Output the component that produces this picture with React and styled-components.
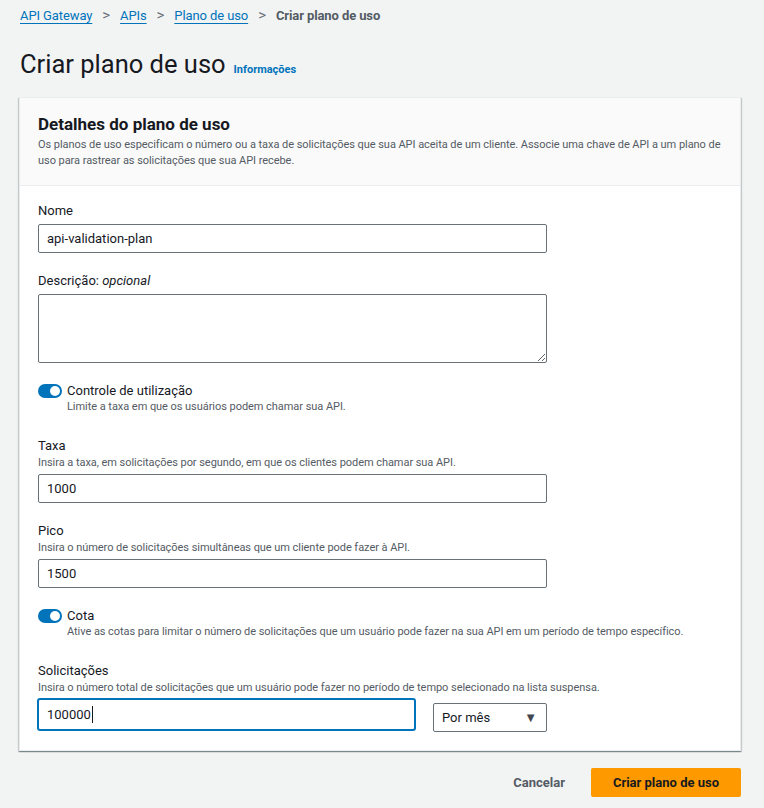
import React from "react";
import styled, { createGlobalStyle } from "styled-components";

const Global = createGlobalStyle`
  html, body { margin: 0; padding: 0; background: #f2f3f3; }
  body { font-family: Roboto, "Noto Sans", "Liberation Sans", sans-serif; color: #16191f; }
  * { box-sizing: border-box; }
`;

const Page = styled.div`
  width: 764px;
  min-height: 808px;
  padding: 5px 23px 11px 19px;
  background: #f2f3f3;
`;

const Breadcrumbs = styled.nav`
  display: flex;
  align-items: center;
  height: 20px;
  padding-left: 1px;
  font-size: 13px;
  letter-spacing: -0.1px;
`;

const Crumb = styled.a`
  color: #0073bb;
  text-decoration: underline;
  text-underline-offset: 3px;
  text-decoration-thickness: 1px;
`;

const Sep = styled.span`
  color: #687078;
  margin: 0 10px;
  font-size: 15px;
  line-height: 20px;
`;

const Current = styled.span`
  color: #545b64;
  font-weight: 700;
`;

const TitleRow = styled.div`
  display: flex;
  align-items: baseline;
  gap: 8px;
  margin-top: 23px;
  padding-left: 1px;
`;

const Title = styled.h1`
  margin: 0;
  font-size: 25.5px;
  font-weight: 400;
  line-height: 32px;
  color: #16191f;
`;

const InfoLink = styled.a`
  font-size: 11px;
  font-weight: 700;
  color: #0073bb;
`;

const Card = styled.section`
  margin-top: 17px;
  background: #fff;
  border: 1px solid #eaeded;
  box-shadow: 0 1px 1px 0 rgba(0, 28, 36, 0.3), 1px 1px 1px 0 rgba(0, 28, 36, 0.15), -1px 1px 1px 0 rgba(0, 28, 36, 0.15);
`;

const CardHeader = styled.header`
  background: #fafafa;
  border-bottom: 1px solid #eaeded;
  padding: 15px 16px 16px 18px;
`;

const CardTitle = styled.h2`
  margin: 0;
  font-size: 17px;
  font-weight: 700;
  line-height: 22px;
`;

const CardDesc = styled.p`
  margin: 2px 0 0;
  font-size: 11px;
  line-height: 16px;
  letter-spacing: -0.05px;
  color: #545b64;
`;

const CardBody = styled.div`
  display: flex;
  flex-direction: column;
  gap: 18px;
  padding: 15px 18px 18px;
`;

const Field = styled.div`
  display: flex;
  flex-direction: column;
`;

const Label = styled.label`
  padding-top: 1px;
  font-size: 13px;
  line-height: 17px;
  color: #16191f;
  em { font-style: italic; }
`;

const Hint = styled.div`
  margin-top: ${(p) => (p.$gap ? 1 : 0)}px;
  font-size: 11px;
  line-height: 16px;
  letter-spacing: -0.05px;
  color: #545b64;
`;

const Control = styled.div`
  margin-top: ${(p) => (p.$tight ? 3 : 5)}px;
  display: flex;
  align-items: flex-start;
  gap: 18px;
`;

const Input = styled.input`
  width: 509px;
  height: 29px;
  padding: 0 8px;
  border: 1px solid #687078;
  border-radius: 2px;
  background: #fff;
  font-family: inherit;
  font-size: 13px;
  color: #16191f;
  outline: none;
`;

const Focused = styled.div`
  width: 377px;
  height: 31px;
  padding: 0 8px;
  display: flex;
  align-items: center;
  border: 1px solid #0073bb;
  box-shadow: 0 0 0 1px #0073bb;
  border-radius: 2px;
  background: #fff;
  font-size: 13px;
`;

const Caret = styled.span`
  display: inline-block;
  width: 1px;
  height: 17px;
  background: #16191f;
  margin-left: 1px;
`;

const TextArea = styled.textarea`
  width: 509px;
  height: 69px;
  border: 1px solid #687078;
  border-radius: 2px;
  font-family: inherit;
  font-size: 13px;
  padding: 4px 8px;
  outline: none;
`;

const Select = styled.div`
  margin-top: 4px;
  width: 114px;
  height: 29px;
  display: flex;
  align-items: center;
  justify-content: space-between;
  padding: 0 9px 0 8px;
  border: 1px solid #687078;
  border-radius: 2px;
  background: #fff;
  font-size: 13px;
  color: #16191f;
`;

const Arrow = styled.span`
  font-size: 13px;
  color: #414750;
`;

const ToggleRow = styled.div`
  display: grid;
  grid-template-columns: 24px 1fr;
  column-gap: 5px;
  align-items: center;
  margin-bottom: 3px;
`;

const Toggle = styled.span`
  position: relative;
  width: 24px;
  height: 14px;
  margin-top: 1px;
  border-radius: 7px;
  background: #0073bb;
  &::after {
    content: "";
    position: absolute;
    right: 2px;
    top: 2px;
    width: 10px;
    height: 10px;
    border-radius: 50%;
    background: #fff;
  }
`;

const ToggleHint = styled(Hint)`
  grid-column: 2;
`;

const Actions = styled.div`
  display: flex;
  justify-content: flex-end;
  align-items: center;
  gap: 6px;
  margin-top: 17px;
`;

const Button = styled.button`
  height: 29px;
  padding: 0 ${(p) => (p.$primary ? 22 : 20)}px;
  border: none;
  border-radius: 2px;
  font-family: inherit;
  font-size: 13px;
  font-weight: 700;
  background: ${(p) => (p.$primary ? "#ff9900" : "transparent")};
  color: ${(p) => (p.$primary ? "#16191f" : "#545b64")};
  cursor: pointer;
`;

export default function App() {
  return (
    <>
      <Global />
      <Page>
        <Breadcrumbs>
          <Crumb>API Gateway</Crumb>
          <Sep>&gt;</Sep>
          <Crumb>APIs</Crumb>
          <Sep>&gt;</Sep>
          <Crumb>Plano de uso</Crumb>
          <Sep>&gt;</Sep>
          <Current>Criar plano de uso</Current>
        </Breadcrumbs>
        <TitleRow>
          <Title>Criar plano de uso</Title>
          <InfoLink>Informações</InfoLink>
        </TitleRow>
        <Card>
          <CardHeader>
            <CardTitle>Detalhes do plano de uso</CardTitle>
            <CardDesc>
              Os planos de uso especificam o número ou a taxa de solicitações que sua API aceita de um cliente. Associe uma chave de API a um plano de uso para rastrear as solicitações que sua API recebe.
            </CardDesc>
          </CardHeader>
          <CardBody>
            <Field>
              <Label>Nome</Label>
              <Control>
                <Input defaultValue="api-validation-plan" />
              </Control>
            </Field>
            <Field>
              <Label>
                Descrição: <em>opcional</em>
              </Label>
              <Control>
                <TextArea />
              </Control>
            </Field>
            <ToggleRow>
              <Toggle />
              <Label>Controle de utilização</Label>
              <ToggleHint>Limite a taxa em que os usuários podem chamar sua API.</ToggleHint>
            </ToggleRow>
            <Field>
              <Label>Taxa</Label>
              <Hint $gap>Insira a taxa, em solicitações por segundo, em que os clientes podem chamar sua API.</Hint>
              <Control $tight>
                <Input defaultValue="1000" />
              </Control>
            </Field>
            <Field>
              <Label>Pico</Label>
              <Hint $gap>Insira o número de solicitações simultâneas que um cliente pode fazer à API.</Hint>
              <Control $tight>
                <Input defaultValue="1500" />
              </Control>
            </Field>
            <ToggleRow>
              <Toggle />
              <Label>Cota</Label>
              <ToggleHint>
                Ative as cotas para limitar o número de solicitações que um usuário pode fazer na sua API em um período de tempo específico.
              </ToggleHint>
            </ToggleRow>
            <Field>
              <Label>Solicitações</Label>
              <Hint $gap>Insira o número total de solicitações que um usuário pode fazer no período de tempo selecionado na lista suspensa.</Hint>
              <Control $tight>
                <Focused>
                  100000
                  <Caret />
                </Focused>
                <Select>
                  Por mês
                  <Arrow>▼</Arrow>
                </Select>
              </Control>
            </Field>
          </CardBody>
        </Card>
        <Actions>
          <Button>Cancelar</Button>
          <Button $primary>Criar plano de uso</Button>
        </Actions>
      </Page>
    </>
  );
}
